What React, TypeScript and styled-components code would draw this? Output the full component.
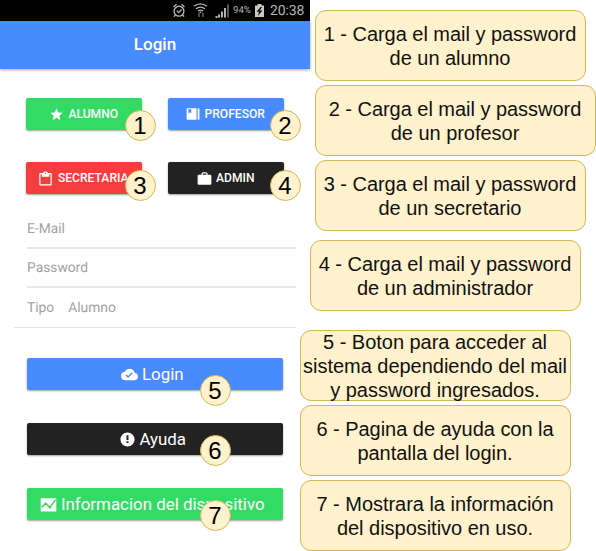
import React from "react";
import styled, { createGlobalStyle } from "styled-components";

const GlobalStyle = createGlobalStyle`
  * { box-sizing: border-box; }
  body { margin: 0; background: #fff; }
`;

const Page = styled.main`
  display: grid;
  grid-template-columns: 300px 296px;
  width: 596px;
  height: 551px;
  overflow: hidden;
`;

const Phone = styled.section`
  width: 310px;
  height: 551px;
  background: #fff;
  font-family: Roboto, sans-serif;
  text-rendering: geometricPrecision;
`;

const StatusBar = styled.div`
  display: flex;
  align-items: center;
  height: 20.5px;
  padding-left: 172px;
  background: #000;
  color: #b4b4b4;
  svg { flex: none; }
`;

const Battery = styled.span`
  width: 20px;
  margin-left: 4px;
  font-size: 9.6px;
  line-height: 21px;
  white-space: nowrap;
`;

const Clock = styled.span`
  margin-left: 6px;
  padding-top: 1px;
  font-size: 14px;
  letter-spacing: -0.15px;
  line-height: 20px;
`;

const TitleBar = styled.header`
  display: flex;
  align-items: center;
  justify-content: center;
  height: 48.5px;
  background: #488aff;
  color: #fff;
  font-size: 17px;
  font-weight: 500;
  box-shadow: 0 1px 3px rgba(0, 0, 0, 0.35);
`;

const Profiles = styled.div`
  display: grid;
  grid-template-columns: 116px 116px;
  gap: 32px 26px;
  padding: 29px 0 0 26px;
`;

const Button = styled.button<{ $color: string; $large?: boolean }>`
  position: relative;
  display: flex;
  align-items: center;
  justify-content: center;
  gap: ${(p) => (p.$large ? 3.5 : 4.5)}px;
  width: ${(p) => (p.$large ? 256 : 116)}px;
  height: 32px;
  padding: 0 ${(p) => (p.$large ? 5 : 1)}px 0 0;
  border: 0;
  border-radius: 2px;
  background: ${(p) => p.$color};
  color: #fff;
  font-family: Roboto, sans-serif;
  font-size: ${(p) => (p.$large ? 16.9 : 12.1)}px;
  font-weight: ${(p) => (p.$large ? 400 : 500)};
  white-space: nowrap;
  box-shadow: 0 1px 2px rgba(0, 0, 0, 0.38);
  svg { flex: none; }
`;

const Badge = styled.span<{ $left: number; $top: number }>`
  position: absolute;
  left: ${(p) => p.$left}px;
  top: ${(p) => p.$top}px;
  display: flex;
  align-items: center;
  justify-content: center;
  width: 31px;
  height: 31px;
  padding: 1px 1px 0 0;
  border: 1px solid #d6b656;
  border-radius: 50%;
  background: #fff2cc;
  color: #000;
  font: 400 24px/28px "Liberation Sans", Arial, sans-serif;
`;

const Form = styled.div`
  margin: 16px 0 0 14px;
  width: 282px;
  border-bottom: 1px solid #e2e2e2;
`;

const Field = styled.div<{ $height: number; $line?: boolean }>`
  display: flex;
  align-items: center;
  gap: 14px;
  height: ${(p) => p.$height}px;
  margin-left: 13px;
  padding-top: 1px;
  border-bottom: ${(p) => (p.$line ? "2px solid #e8e8e8" : "0")};
  color: #a2a2a2;
  font-size: 13.8px;
`;

const Actions = styled.div`
  display: flex;
  flex-direction: column;
  gap: 33px;
  padding: 30px 0 0 27px;
`;

const Notes = styled.aside`
  display: flex;
  flex-direction: column;
  align-items: flex-start;
  gap: 4px;
  padding-top: 10px;
  z-index: 1;
`;

const Note = styled.div<{ $indent?: number; $width?: number; $before?: number }>`
  display: flex;
  flex: none;
  align-items: center;
  justify-content: center;
  width: ${(p) => p.$width ?? 271}px;
  height: 71px;
  margin-left: ${(p) => p.$indent ?? 0}px;
  margin-top: ${(p) => p.$before ?? 0}px;
  padding-right: 1px;
  border: 1px solid #d6b656;
  border-radius: 11px;
  background: #fff2cc;
  color: #111;
  font: 20px/24px "Liberation Sans", Arial, sans-serif;
  letter-spacing: -0.03px;
  text-align: center;
  white-space: pre;
`;

const paths: Record<string, string> = {
  star: "M12 17.27 18.18 21l-1.64-7.03L22 9.24l-7.19-.61L12 2 9.19 8.63 2 9.24l5.46 4.73L5.82 21z",
  book: "M3 2h15v20H3a2 2 0 0 1-2-2V4a2 2 0 0 1 2-2zm1 2v7l2.5-2L9 11V4zM20 2h1a2 2 0 0 1 2 2v16a2 2 0 0 1-2 2h-1z",
  clipboard:
    "M20 3h-4.2a4 4 0 0 0-7.6 0H4a2 2 0 0 0-2 2v16a2 2 0 0 0 2 2h16a2 2 0 0 0 2-2V5a2 2 0 0 0-2-2zm-8-.5a1 1 0 1 1 0 2 1 1 0 0 1 0-2zM20 21H4V5h2v4h12V5h2z",
  briefcase:
    "M21 6h-4V4l-2-2H9L7 4v2H3a2 2 0 0 0-2 2v12a2 2 0 0 0 2 2h18a2 2 0 0 0 2-2V8a2 2 0 0 0-2-2zm-6 0H9V4h6z",
  cloud:
    "M19.35 10.04A7.49 7.49 0 0 0 12 4C9.11 4 6.6 5.64 5.35 8.04A6 6 0 0 0 6 20h13a5 5 0 0 0 .35-9.96zM10 17l-3.5-3.5 1.41-1.41L10 14.17 15.18 9l1.41 1.41z",
  alert: "M12 2a10 10 0 1 0 0 20 10 10 0 0 0 0-20zm1.4 15h-2.8v-2.6h2.8zm0-4.4h-2.8V6h2.8z",
};

const Icon = ({ name, size }: { name: string; size: number }) => (
  <svg width={size} height={size} viewBox="0 0 24 24" fill="currentColor" fillRule="evenodd">
    <path d={paths[name]} />
  </svg>
);

const ChartIcon = () => (
  <svg width="17" height="17" viewBox="0 0 24 24">
    <path d="M1 3h22v18a1 1 0 0 1-1 1H2a1 1 0 0 1-1-1z" fill="#fff" />
    <path d="m2 16 6-5 6 5 8-11" fill="none" stroke="#32db64" strokeWidth="2" />
    <circle cx="8" cy="11" r="1.8" fill="#32db64" />
    <circle cx="14" cy="16" r="1.8" fill="#32db64" />
  </svg>
);

const StatusIcons = () => (
  <svg width="57" height="21" viewBox="172 0 57 21" fill="none" stroke="currentColor">
    <circle cx="179" cy="11.2" r="4.9" strokeWidth="1.4" />
    <path d="m173.5 7 3-2.7m8 2.7-3-2.7M175.2 15l-1.2 1.7m8.8-1.7 1.2 1.7" strokeWidth="1.4" />
    <path d="m176.7 10.7 2 1.8 3-3" strokeWidth="1.2" />
    <path d="M194 6.2q6.5-4.8 13 0M196 8.7q4.5-3.3 9 0M198 11q2.5-1.8 5 0" strokeWidth="1.3" />
    <path d="M200.5 11.5v1.5" strokeWidth="1.5" />
    <path d="M199 12.5V17m4-4.5V17" stroke="#666" strokeWidth="1.5" />
    <path d="M215.5 17h2M219 14.5v3M222 11.5v6M225 8v9.5" strokeWidth="2" />
    <path d="M228 4.5v13" stroke="#555" strokeWidth="2" />
  </svg>
);

const BatteryGlyph = styled.svg`
  margin-left: 2px;
`;

const BatteryIcon = () => (
  <BatteryGlyph width="9" height="15" viewBox="0 0 9 15">
    <path d="M2.5 1h4v1.5H9V14H0V2.5h2.5z" fill="#c8c8c8" />
    <path d="m5.5 4-4 4.8h2.4L3 13l4.5-5.4H4.9L7 4z" fill="#111" />
  </BatteryGlyph>
);

export default function App() {
  return (
    <>
      <GlobalStyle />
      <Page>
        <Phone>
          <StatusBar>
            <StatusIcons />
            <Battery>94%</Battery>
            <BatteryIcon />
            <Clock>20:38</Clock>
          </StatusBar>
          <TitleBar>Login</TitleBar>
          <Profiles>
            <Button $color="#32db64">
              <Icon name="star" size={15} />ALUMNO<Badge $left={99} $top={12}>1</Badge>
            </Button>
            <Button $color="#488aff">
              <Icon name="book" size={14} />PROFESOR<Badge $left={102} $top={12}>2</Badge>
            </Button>
            <Button $color="#f53d3d">
              <Icon name="clipboard" size={15} />SECRETARIA<Badge $left={99} $top={8}>3</Badge>
            </Button>
            <Button $color="#222">
              <Icon name="briefcase" size={15} />ADMIN<Badge $left={102} $top={8}>4</Badge>
            </Button>
          </Profiles>
          <Form>
            <Field $height={39} $line>E-Mail</Field>
            <Field $height={39} $line>Password</Field>
            <Field $height={39}><span>Tipo</span><span>Alumno</span></Field>
          </Form>
          <Actions>
            <Button $color="#488aff" $large>
              <Icon name="cloud" size={17} />Login<Badge $left={173} $top={17}>5</Badge>
            </Button>
            <Button $color="#222" $large>
              <Icon name="alert" size={17} />Ayuda<Badge $left={173} $top={12}>6</Badge>
            </Button>
            <Button $color="#32db64" $large>
              <ChartIcon />Informacion del dispositivo<Badge $left={173} $top={12}>7</Badge>
            </Button>
          </Actions>
        </Phone>
        <Notes>
          <Note $indent={15}>{"1 - Carga el mail y password\nde un alumno"}</Note>
          <Note $indent={15} $width={281}>{"2 - Carga el mail y password\nde un profesor"}</Note>
          <Note $indent={15}>{"3 - Carga el mail y password\nde un secretario"}</Note>
          <Note $indent={10} $before={5}>{"4 - Carga el mail y password\nde un administrador"}</Note>
          <Note $before={15}>{"5 - Boton para acceder al\nsistema dependiendo del mail\ny password ingresados."}</Note>
          <Note>{"6 - Pagina de ayuda con la\npantalla del login."}</Note>
          <Note>{"7 - Mostrara la información\ndel dispositivo en uso."}</Note>
        </Notes>
      </Page>
    </>
  );
}
